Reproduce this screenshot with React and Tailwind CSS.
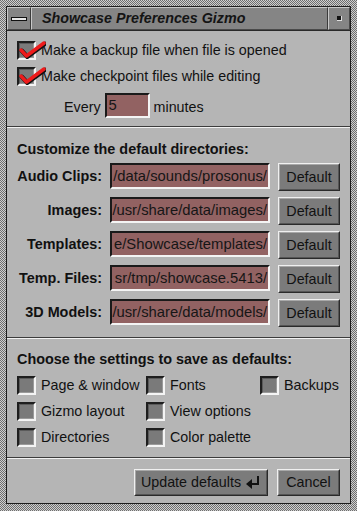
import React from "react";

const font = "font-['Liberation_Sans',Arial,sans-serif]";

// visible tail of each path, as the scrolled text fields show it
const dirs = [
  { label: "Audio Clips:", path: "/data/sounds/prosonus/" },
  { label: "Images:", path: "/usr/share/data/images/" },
  { label: "Templates:", path: "e/Showcase/templates/" },
  { label: "Temp. Files:", path: "sr/tmp/showcase.5413/" },
  { label: "3D Models:", path: "/usr/share/data/models/" },
];

const Separator = () => (
  <div className="flex flex-col">
    <div className="h-px bg-[#3c3c3c]" />
    <div className="h-px bg-[#f2f2f2]" />
  </div>
);

const CheckMark = () => (
  <svg
    className="pointer-events-none absolute left-[2px] top-[-1px]"
    width="27"
    height="19"
    viewBox="0 0 27 19"
  >
    <path
      d="M2 10 L7.5 16 L25 3"
      fill="none"
      stroke="#111"
      strokeWidth="4.5"
      strokeLinecap="round"
      strokeLinejoin="round"
      transform="translate(0.8 0.8)"
    />
    <path
      d="M2 10 L7.5 16 L25 3"
      fill="none"
      stroke="#ee1b1b"
      strokeWidth="3.5"
      strokeLinecap="round"
      strokeLinejoin="round"
    />
  </svg>
);

const Toggle = ({ checked, label }) => (
  <div className="flex h-[19px] items-center">
    <div className="relative h-[19px] w-[19px] shrink-0">
      <div className="h-full w-full border-2 border-t-[#1e1e1e] border-l-[#1e1e1e] border-b-[#f4f4f4] border-r-[#f4f4f4] bg-[#7a7a7a]">
        <div className="h-full w-full border border-t-[#5a5a5a] border-l-[#5a5a5a] border-b-[#9a9a9a] border-r-[#9a9a9a]" />
      </div>
      {checked && <CheckMark />}
    </div>
    <span className="ml-[5px] whitespace-nowrap text-[14.3px] leading-none text-[#111]">
      {label}
    </span>
  </div>
);

const Button = ({ children, className = "" }) => (
  <div
    className={`flex items-center justify-center border border-t-[#f0f0f0] border-l-[#f0f0f0] border-b-[#2a2a2a] border-r-[#2a2a2a] bg-[#7b7b7b] ${className}`}
  >
    <div className="flex h-full w-full items-center justify-center border border-t-[#a8a8a8] border-l-[#a8a8a8] border-b-[#555] border-r-[#555] text-[14.3px] leading-none text-[#111]">
      {children}
    </div>
  </div>
);

const Field = ({ value, className = "" }) => (
  <div
    className={`flex items-center overflow-hidden border-2 border-t-[#1a1a1a] border-l-[#1a1a1a] border-b-[#f4f4f4] border-r-[#f4f4f4] bg-[#926262] ${className}`}
  >
    <span className="whitespace-nowrap px-[1px] text-[14.8px] leading-none text-[#161616]">
      {value}
    </span>
  </div>
);

const ReturnIcon = () => (
  <svg width="16" height="14" viewBox="0 0 16 14" className="ml-[4px]">
    <path d="M13 1 V9 H6" fill="none" stroke="#111" strokeWidth="2" />
    <path d="M1 9 L7 4 V14 Z" fill="#111" />
  </svg>
);

export default function App() {
  return (
    <div
      className={`${font} h-[511px] w-[357px] bg-[image:repeating-conic-gradient(#cfcfcf_0%_25%,#6e6e6e_0%_50%)] bg-[length:2px_2px] pb-[7px] pl-[6px] pr-[6px] pt-[6px]`}
    >
      <div className="flex h-full flex-col border border-[#1c1c1c] bg-[#b5b5b5]">
        {/* title bar */}
        <div className="flex h-[24px] shrink-0 border-b border-[#2a2a2a] bg-[#858585]">
          <div className="flex w-[24px] items-center justify-center border border-t-[#c8c8c8] border-l-[#c8c8c8] border-b-[#4a4a4a] border-r-[#3a3a3a]">
            <div className="h-[4px] w-[16px] border border-[#111] bg-[#e8e8e8]" />
          </div>
          <div className="flex flex-1 items-center border border-t-[#c8c8c8] border-l-[#c8c8c8] border-b-[#4a4a4a] border-r-[#3a3a3a] pl-[10px]">
            <span className="whitespace-nowrap text-[14.3px] font-bold italic leading-none text-[#141414]">
              Showcase Preferences Gizmo
            </span>
          </div>
          <div className="flex w-[22px] items-center justify-center border border-t-[#c8c8c8] border-l-[#c8c8c8] border-b-[#4a4a4a] border-r-[#4a4a4a]">
            <div className="h-[5px] w-[5px] border-b border-r border-[#e0e0e0] bg-[#111]" />
          </div>
        </div>

        {/* backup options */}
        <div className="flex flex-col gap-[7px] px-[10px] pb-[8px] pt-[10px]">
          <Toggle checked label="Make a backup file when file is opened" />
          <Toggle checked label="Make checkpoint files while editing" />
          <div className="flex items-center pl-[47px]">
            <span className="pt-[3px] text-[14.3px] leading-none text-[#111]">Every</span>
            <Field value="5" className="ml-[4px] h-[25px] w-[45px] pl-[1px]" />
            <span className="ml-[4px] pt-[3px] text-[14.3px] leading-none text-[#111]">minutes</span>
          </div>
        </div>

        <Separator />

        {/* directories */}
        <div className="flex flex-col px-[10px] pb-[10px] pt-[14px]">
          <div className="text-[14.4px] font-bold leading-none text-[#111]">
            Customize the default directories:
          </div>
          <div className="mt-[7px] flex flex-col gap-[6px]">
            {dirs.map((d) => (
              <div key={d.label} className="flex h-[28px] items-start">
                <div className="flex h-[26px] w-[85px] items-center justify-end whitespace-nowrap text-[14.4px] font-bold leading-none text-[#111]">
                  {d.label}
                </div>
                <Field value={d.path} className="ml-[8px] h-[26px] w-[160px] justify-end" />
                <Button className="ml-[8px] h-[28px] w-[62px]">Default</Button>
              </div>
            ))}
          </div>
        </div>

        <Separator />

        {/* save settings */}
        <div className="flex flex-col px-[10px] pb-[10px] pt-[13px]">
          <div className="text-[14.4px] font-bold leading-none text-[#111]">
            Choose the settings to save as defaults:
          </div>
          <div className="mt-[9px] grid grid-cols-[129px_114px_1fr] gap-y-[7px]">
            <Toggle label="Page & window" />
            <Toggle label="Fonts" />
            <Toggle label="Backups" />
            <Toggle label="Gizmo layout" />
            <Toggle label="View options" />
            <div />
            <Toggle label="Directories" />
            <Toggle label="Color palette" />
            <div />
          </div>
        </div>

        <Separator />

        <div className="flex flex-1 items-start justify-end gap-[9px] px-[10px] pt-[10px]">
          <Button className="h-[27px] w-[134px]">
            Update defaults
            <ReturnIcon />
          </Button>
          <Button className="h-[27px] w-[63px]">Cancel</Button>
        </div>
      </div>
    </div>
  );
}
